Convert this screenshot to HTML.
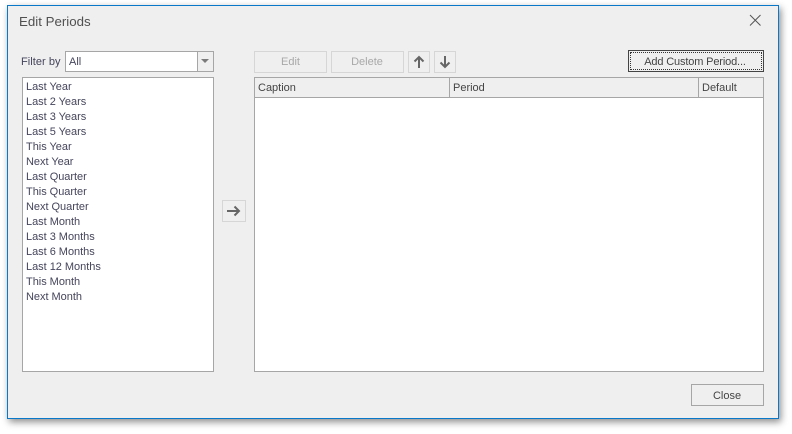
<!DOCTYPE html>
<html><head><meta charset="utf-8"><style>
html,body{margin:0;padding:0;width:792px;height:434px;background:#fff;overflow:hidden}
body{font-family:"Liberation Sans",sans-serif;font-size:11px;color:#45455c;position:relative}
div{box-sizing:border-box;position:absolute}
.btn{border:1px solid #a6a6a6;background:#efefef;text-align:center;color:#444;line-height:21px}
.dis{border-color:#d6d6d6;color:#a8a8a8}
.row{left:26px;height:15px;line-height:15px;white-space:nowrap;letter-spacing:-.03px}
.hd{top:79px;height:19px;line-height:19px;color:#444;white-space:nowrap}
</style></head><body>
<div style="left:7px;top:5px;width:772px;height:414px;background:#efefef;border:1px solid #0a78c8;box-shadow:2px 3px 7px rgba(0,0,0,.45)"></div>
<div style="left:19px;top:13px;font-size:13.3px;line-height:18px;color:#505050">Edit Periods</div>
<svg style="position:absolute;left:749px;top:14px" width="13" height="13"><path d="M1 1L11.500 11.500M11.500 1L1 11.500" stroke="#555" stroke-width="1" fill="none"/></svg>
<div style="left:21px;top:54px;line-height:16px;letter-spacing:.05px">Filter by</div>
<div style="left:65px;top:51px;width:149px;height:21px;background:#fff;border:1px solid #a6a6a6;padding-left:3px;line-height:20px">All</div>
<div style="left:197px;top:52px;width:16px;height:19px;background:#efefef;border-left:1px solid #a6a6a6"></div>
<svg style="position:absolute;left:201px;top:59px" width="9" height="5"><path d="M0 0H8L4 4Z" fill="#7a7a7a"/></svg>
<div style="left:22px;top:77px;width:192px;height:295px;background:#fff;border:1px solid #a6a6a6"></div>
<div class="row" style="top:80px">Last Year</div>
<div class="row" style="top:95px">Last 2 Years</div>
<div class="row" style="top:110px">Last 3 Years</div>
<div class="row" style="top:125px">Last 5 Years</div>
<div class="row" style="top:140px">This Year</div>
<div class="row" style="top:155px">Next Year</div>
<div class="row" style="top:170px">Last Quarter</div>
<div class="row" style="top:185px">This Quarter</div>
<div class="row" style="top:200px">Next Quarter</div>
<div class="row" style="top:215px">Last Month</div>
<div class="row" style="top:230px">Last 3 Months</div>
<div class="row" style="top:245px">Last 6 Months</div>
<div class="row" style="top:260px">Last 12 Months</div>
<div class="row" style="top:275px">This Month</div>
<div class="row" style="top:290px">Next Month</div>
<div class="btn dis" style="left:222px;top:200px;width:24px;height:22px"></div>
<svg style="position:absolute;left:226px;top:204px" width="16" height="14"><path d="M1 7H13M8.500 2.500L13 7L8.500 11.500" stroke="#666" stroke-width="2" fill="none"/></svg>
<div class="btn dis" style="left:254px;top:51px;width:73px;height:22px">Edit</div>
<div class="btn dis" style="left:331px;top:51px;width:73px;height:22px;padding-right:1px">Delete</div>
<div class="btn dis" style="left:408px;top:51px;width:22px;height:22px"></div>
<svg style="position:absolute;left:412px;top:55px" width="14" height="14"><path d="M7 13V2M2.500 6.500L7 2L11.500 6.500" stroke="#666" stroke-width="2" fill="none"/></svg>
<div class="btn dis" style="left:434px;top:51px;width:22px;height:22px"></div>
<svg style="position:absolute;left:438px;top:55px" width="14" height="14"><path d="M7 1V12M2.500 7.500L7 12L11.500 7.500" stroke="#666" stroke-width="2" fill="none"/></svg>
<div class="btn" style="left:628px;top:50px;width:136px;height:22px;border-color:#444"></div>
<div style="left:630px;top:52px;width:132px;height:18px;border:1px dotted #333;text-align:center;line-height:18px;color:#444;letter-spacing:-.15px;padding-right:2px">Add Custom Period...</div>
<div style="left:254px;top:77px;width:510px;height:295px;background:#fff;border:1px solid #a6a6a6"></div>
<div style="left:255px;top:78px;width:508px;height:20px;background:#efefef;border-bottom:1px solid #a6a6a6"></div>
<div style="left:449px;top:78px;width:1px;height:19px;background:#a6a6a6"></div>
<div style="left:698px;top:78px;width:1px;height:19px;background:#a6a6a6"></div>
<div class="hd" style="left:258px">Caption</div>
<div class="hd" style="left:453px">Period</div>
<div class="hd" style="left:702px">Default</div>
<div class="btn" style="left:691px;top:384px;width:73px;height:22px;line-height:22px;padding-right:1px">Close</div>
</body></html>
